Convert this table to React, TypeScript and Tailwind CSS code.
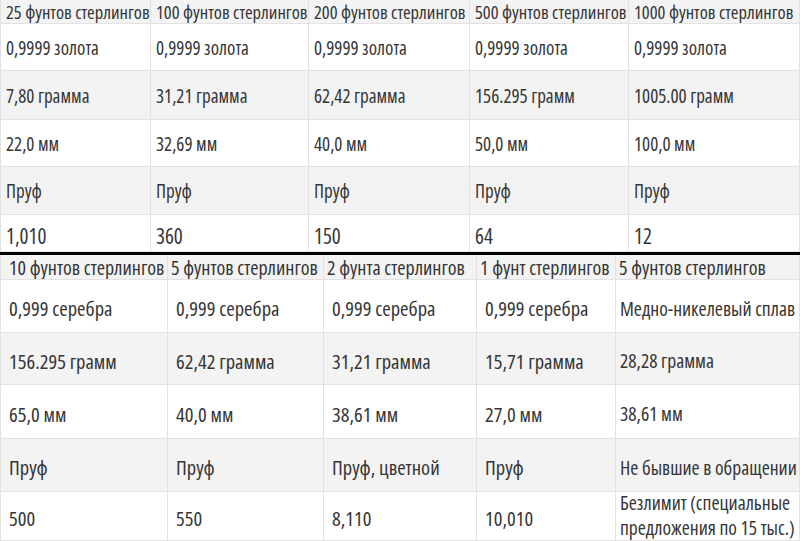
import React from 'react';

const TOP_COLS = 'grid-cols-[151px_158px_161px_159px_171px]';
const BOTTOM_COLS = 'grid-cols-[168px_156px_153px_139px_184px]';

const TOP = [
  ['25 фунтов стерлингов', '100 фунтов стерлингов', '200 фунтов стерлингов', '500 фунтов стерлингов', '1000 фунтов стерлингов'],
  ['0,9999 золота', '0,9999 золота', '0,9999 золота', '0,9999 золота', '0,9999 золота'],
  ['7,80 грамма', '31,21 грамма', '62,42 грамма', '156.295 грамм', '1005.00 грамм'],
  ['22,0 мм', '32,69 мм', '40,0 мм', '50,0 мм', '100,0 мм'],
  ['Пруф', 'Пруф', 'Пруф', 'Пруф', 'Пруф'],
  ['1,010', '360', '150', '64', '12'],
];

const BOTTOM = [
  ['10 фунтов стерлингов', '5 фунтов стерлингов', '2 фунта стерлингов', '1 фунт стерлингов', '5 фунтов стерлингов'],
  ['0,999 серебра', '0,999 серебра', '0,999 серебра', '0,999 серебра', 'Медно-никелевый сплав'],
  ['156.295 грамм', '62,42 грамма', '31,21 грамма', '15,71 грамма', '28,28 грамма'],
  ['65,0 мм', '40,0 мм', '38,61 мм', '27,0 мм', '38,61 мм'],
  ['Пруф', 'Пруф', 'Пруф, цветной', 'Пруф', 'Не бывшие в обращении'],
  ['500', '550', '8,110', '10,010', 'Безлимит (специальные предложения по 15 тыс.)'],
];

const TOP_H = ['h-[24px]', 'h-[47px]', 'h-[49px]', 'h-[47px]', 'h-[48px]', 'h-[37px]'];
const BOTTOM_H = ['h-[25px]', 'h-[53px]', 'h-[52px]', 'h-[54px]', 'h-[53px]', 'h-[49px]'];

function Table({ rows, cols, heights, big }: { rows: string[][]; cols: string; heights: string[]; big?: boolean }) {
  return (
    <div className={`grid ${cols}`}>
      {rows.map((row, r) =>
        row.map((cell, c) => {
          const gray = r % 2 === 0;
          const last = r === rows.length - 1;
          const edge = big && c === 4;
          let align = 'items-center';
          if (r === 0) align = 'items-start pt-[1px]';
          else if (last && !big) align = 'items-end pb-[3px]';
          else if (big) align = 'items-center pt-[6px]';
          else align = 'items-center pt-[3px]';
          let size = 'text-[19px]';
          if (big) size = r === 0 ? 'text-[20px]' : edge ? 'text-[19.5px]' : 'text-[20.5px]';
          else if (r === 0) size = 'text-[18.5px]';
          else if (last) size = 'text-[21px]';
          let pad = big ? 'px-[8px]' : 'px-[5px]';
          if (edge) pad = 'pl-[4px] pr-0';
          if (big && r === 0 && c > 0) pad = 'pl-[3px] pr-0';
          return (
            <div
              key={`${r}-${c}`}
              className={`${heights[r]} flex ${align} ${size} ${pad} ${
                gray ? 'bg-[#f3f3f3]' : 'bg-white'
              } border-r border-b border-[#e2e2e2] ${c === 0 ? 'border-l' : ''} overflow-hidden whitespace-nowrap leading-[1.15] text-[#363636]`}
            >
              {cell.startsWith('Безлимит') ? (
                <span className="flex flex-col leading-[1.25] -mt-[7px]">
                  <span>Безлимит (специальные</span>
                  <span>предложения по 15 тыс.)</span>
                </span>
              ) : (
                cell
              )}
            </div>
          );
        })
      )}
    </div>
  );
}

export default function App() {
  return (
    <div className="w-[800px] h-[541px] overflow-hidden bg-white [font-family:'Open_Sans',sans-serif] [font-stretch:75%]">
      <Table rows={TOP} cols={TOP_COLS} heights={TOP_H} />
      <div className="h-[3px] bg-black" />
      <Table rows={BOTTOM} cols={BOTTOM_COLS} heights={BOTTOM_H} big />
    </div>
  );
}
